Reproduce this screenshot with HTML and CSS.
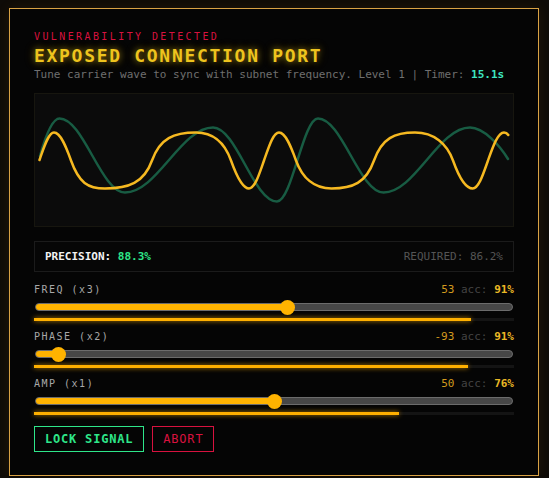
FILE: index.html
```html
<!DOCTYPE html>
<html lang="en">
<head>
<meta charset="utf-8">
<title>Exposed Connection Port</title>
<link rel="stylesheet" href="styles.css">
</head>
<body>
<div class="screen">
  <section class="panel">
    <div class="eyebrow">VULNERABILITY DETECTED</div>
    <h1 class="title">EXPOSED CONNECTION PORT</h1>
    <p class="brief">Tune carrier wave to sync with subnet frequency. Level 1 | Timer: <span class="timer">15.1s</span></p>

    <div class="scope">
      <svg class="scope-plot" viewBox="0 0 478 132" width="478" height="132">
        <!-- target carrier -->
        <path class="wave-target" d="M5,62 C10,44 17,24.5 24.5,24.5 C48.3,24.5 66.2,98.5 90,98.5 C122,98.5 146,33.5 178,33.5 C201.3,33.5 218.7,107.5 242,107.5 C256.9,107.5 268.1,24.5 283,24.5 C306.8,24.5 324.7,98.5 348.5,98.5 C380,98.5 403.5,33.5 435,33.5 C449,33.5 465,52 473,65"/>
        <!-- tuned signal -->
        <path class="wave-signal" d="M4.5,66 C8.5,54.8 13.2,38.5 19,38.5 C25.8,38.5 31.5,53.9 36,66.5 C44,88.9 53,94.5 70,94.5 C93.5,94.5 109,88.9 117,66.5 C125,44.1 139,38.5 161,38.5 C178.5,38.5 190,49.7 196,66.5 C200.5,79.1 206.8,94.5 214,94.5 C220,94.5 224.5,79.1 229,66.5 C233.5,53.9 238,38.5 244,38.5 C250.8,38.5 256.5,53.9 261,66.5 C267,83.3 278.8,94.5 296.5,94.5 C317.8,94.5 331,88.9 339,66.5 C347,44.1 359.5,38.5 380,38.5 C399,38.5 412,49.7 418,66.5 C422.5,79.1 429.8,94.5 437.7,94.5 C443.8,94.5 448.5,79.1 453,66.5 C457.5,53.9 462.6,38.5 469,38.5 C471,38.5 472.3,39.5 473.3,41"/>
      </svg>
    </div>

    <div class="readout">
      <span class="precision">PRECISION: <b class="precision-value">88.3%</b></span>
      <span class="required">REQUIRED: 86.2%</span>
    </div>

    <div class="controls">
      <div class="control">
        <div class="control-head">
          <span class="control-name">FREQ (x3)</span>
          <span class="control-stats"><span class="stat-value">53</span> <span class="stat-label">acc:</span> <span class="stat-acc">91%</span></span>
        </div>
        <div class="slider" style="--v:0.53">
          <div class="slider-track"><div class="slider-fill"></div></div>
          <div class="slider-thumb"></div>
        </div>
        <div class="meter"><div class="meter-fill" style="width:91%"></div></div>
      </div>

      <div class="control">
        <div class="control-head">
          <span class="control-name">PHASE (x2)</span>
          <span class="control-stats"><span class="stat-value">-93</span> <span class="stat-label">acc:</span> <span class="stat-acc">91%</span></span>
        </div>
        <div class="slider" style="--v:0.035">
          <div class="slider-track"><div class="slider-fill"></div></div>
          <div class="slider-thumb"></div>
        </div>
        <div class="meter"><div class="meter-fill" style="width:90.5%"></div></div>
      </div>

      <div class="control">
        <div class="control-head">
          <span class="control-name">AMP (x1)</span>
          <span class="control-stats"><span class="stat-value">50</span> <span class="stat-label">acc:</span> <span class="stat-acc">76%</span></span>
        </div>
        <div class="slider" style="--v:0.5">
          <div class="slider-track"><div class="slider-fill"></div></div>
          <div class="slider-thumb"></div>
        </div>
        <div class="meter"><div class="meter-fill" style="width:76%"></div></div>
      </div>
    </div>

    <div class="actions">
      <button class="btn btn-lock" type="button">LOCK SIGNAL</button>
      <button class="btn btn-abort" type="button">ABORT</button>
    </div>
  </section>
</div>
</body>
</html>
```

FILE: styles.css
```css
* {
  box-sizing: border-box;
}

html,
body {
  margin: 0;
  padding: 0;
  background: #0e0b07;
}

body {
  font-family: "DejaVu Sans Mono", "Liberation Mono", monospace;
  color: #cfcfcf;
}

.screen {
  padding: 8px 0 0 9px;
}

.panel {
  width: 530px;
  background: #050505;
  border: 1px solid #d9a244;
  box-shadow: 0 0 14px rgba(255, 170, 40, 0.08);
  padding: 22px 24px 23px;
  display: flex;
  flex-direction: column;
}

.eyebrow {
  font-size: 10px;
  line-height: 12px;
  letter-spacing: 2.4px;
  color: #d8123f;
}

.title {
  margin: 2px 0 0;
  font-size: 18px;
  line-height: 22px;
  font-weight: bold;
  letter-spacing: 1.7px;
  color: #eec41e;
  text-shadow: 0 0 6px rgba(238, 196, 30, 0.55), 0 0 12px rgba(238, 196, 30, 0.25);
}

.brief {
  margin: 1px 0 0;
  font-size: 11px;
  line-height: 14px;
  color: #6f6f6f;
  white-space: nowrap;
}

.timer {
  color: #3ee6c2;
  font-weight: bold;
}

/* oscilloscope */
.scope {
  margin-top: 11px;
  height: 134px;
  background: #0b0b0b;
  border: 1px solid #17160f;
}

.scope-plot {
  display: block;
}

.wave-target,
.wave-signal {
  fill: none;
  stroke-width: 2.5;
  stroke-linecap: round;
  stroke-linejoin: round;
}

.wave-target {
  stroke: #185c43;
}

.wave-signal {
  stroke: #f6b921;
}

/* precision readout */
.readout {
  margin-top: 14px;
  display: flex;
  justify-content: space-between;
  align-items: baseline;
  padding: 8px 10px;
  border: 1px solid #1b1b1b;
  background: #060606;
  font-size: 11px;
  line-height: 13px;
}

.precision {
  color: #f2f2f2;
  font-weight: bold;
}

.precision-value {
  color: #2ee68a;
}

.required {
  color: #555555;
}

/* sliders */
.controls {
  margin-top: 11px;
  display: flex;
  flex-direction: column;
  gap: 9px;
}

.control-head {
  display: flex;
  justify-content: space-between;
  align-items: baseline;
  height: 14px;
  line-height: 14px;
}

.control-name {
  font-size: 10px;
  letter-spacing: 1.5px;
  color: #a8a8a8;
}

.control-stats {
  font-size: 11px;
  white-space: pre;
}

.stat-value {
  color: #d29a1e;
}

.stat-label {
  color: #434343;
}

.stat-acc {
  color: #eab825;
  font-weight: bold;
}

.slider {
  position: relative;
  margin: 2px 1px 0;
  height: 16px;
}

.slider-track {
  position: absolute;
  left: 0;
  right: 0;
  top: 4px;
  height: 8px;
  border-radius: 4px;
  background: #474747;
  border: 1px solid #6c6c6c;
  overflow: hidden;
}

.slider-fill {
  height: 100%;
  width: calc(7.5px + var(--v) * (100% - 15px));
  background: #ffb300;
}

.slider-thumb {
  position: absolute;
  top: 0.5px;
  left: calc(var(--v) * (100% - 15px));
  width: 15px;
  height: 15px;
  border-radius: 50%;
  background: #ffb300;
}

.meter {
  margin-top: 3px;
  height: 3px;
  background: #141414;
}

.meter-fill {
  height: 100%;
  background: #ffb000;
  box-shadow: 0 0 5px rgba(255, 176, 0, 0.75);
}

/* actions */
.actions {
  margin-top: 11px;
  display: flex;
  gap: 8px;
}

.btn {
  font-family: inherit;
  font-size: 12px;
  line-height: 14px;
  letter-spacing: 0.8px;
  padding: 5px 10px;
  background: transparent;
  border: 1px solid;
  border-radius: 0;
  cursor: pointer;
}

.btn-lock {
  color: #2ee68a;
  border-color: #2ee68a;
  font-weight: bold;
}

.btn-abort {
  color: #d8123f;
  border-color: #d8123f;
}
```
